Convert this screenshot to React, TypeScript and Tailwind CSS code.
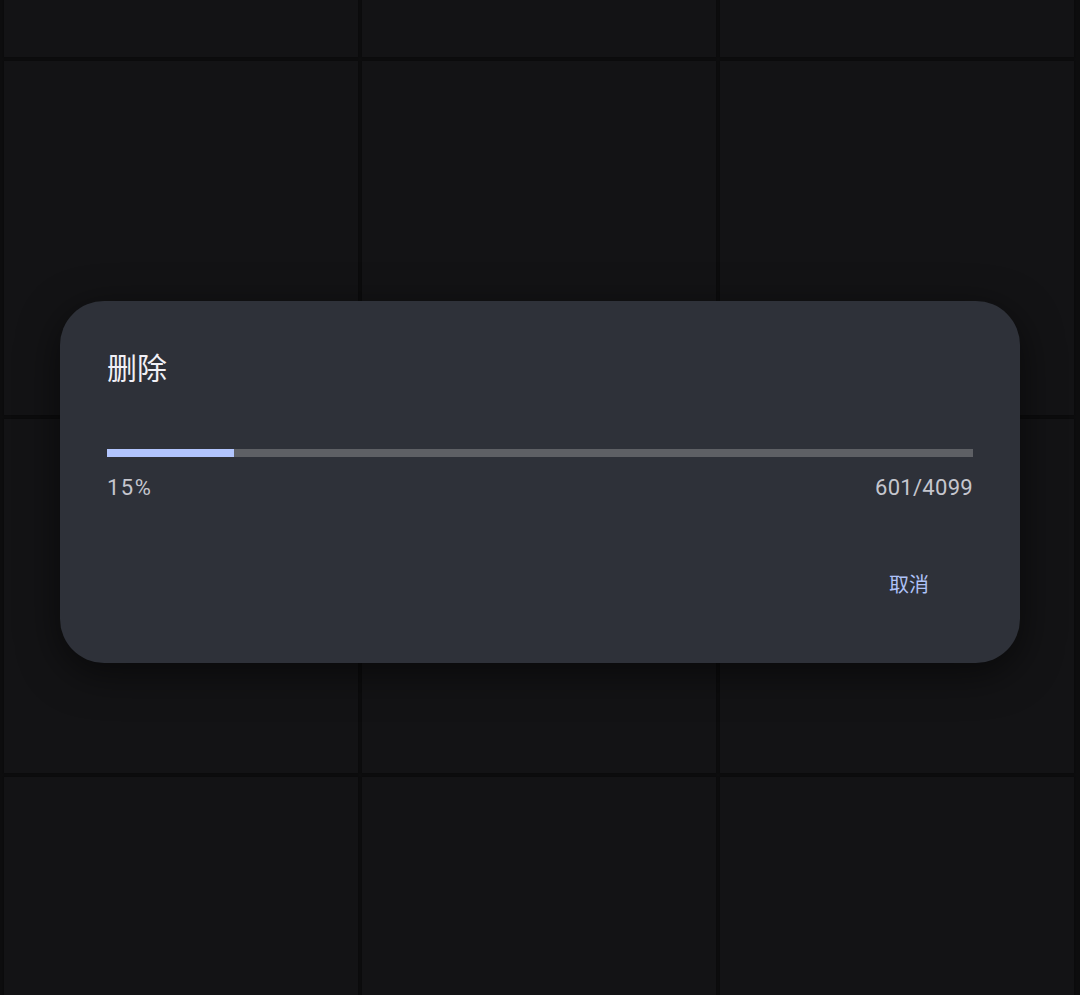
import React from "react";

const cjk = { fontFamily: '"Noto Sans CJK SC", "Noto Sans", sans-serif' };
const num = { fontFamily: 'Roboto, "Noto Sans", sans-serif' };

export default function App() {
  const tiles = Array.from({ length: 12 });
  const done = 601;
  const total = 4099;
  const pct = (done / total) * 100;
  return (
    <div className="relative w-[1080px] h-[995px] overflow-hidden bg-[#0d0d0e]">
      <div className="grid grid-cols-[354px_354px_354px] gap-[4px] pl-[4px] mt-[-297px]">
        {tiles.map((_, i) => (
          <div
            key={i}
            className="h-[354px] bg-[#131315] shadow-[0_0_2px_rgba(0,0,0,0.4)]"
          />
        ))}
      </div>

      <div className="absolute left-[60px] top-[301px] w-[960px] h-[362px] rounded-[44px] bg-[#2e3139] shadow-[0_10px_40px_rgba(0,0,0,0.55)] px-[47px] pt-[47px] flex flex-col">
        <div className="text-[30px] leading-[36px] text-[#f1f0f6]" style={cjk}>
          删除
        </div>
        <div className="mt-[65px] h-[8px] w-full bg-[#5e6065] flex">
          <div className="h-full bg-[#b2c5fe]" style={{ width: `${pct}%` }} />
        </div>
        <div
          className="mt-[17px] flex justify-between text-[22px] leading-[28px] text-[#c5c6ce]"
          style={num}
        >
          <span className="tracking-[1.5px]">15%</span>
          <span className="tracking-[0.3px]">601/4099</span>
        </div>
        <div className="mt-[68px] flex justify-end pr-[44px]">
          <span className="text-[20px] leading-[28px] text-[#aec2f8]" style={cjk}>
            取消
          </span>
        </div>
      </div>
    </div>
  );
}
